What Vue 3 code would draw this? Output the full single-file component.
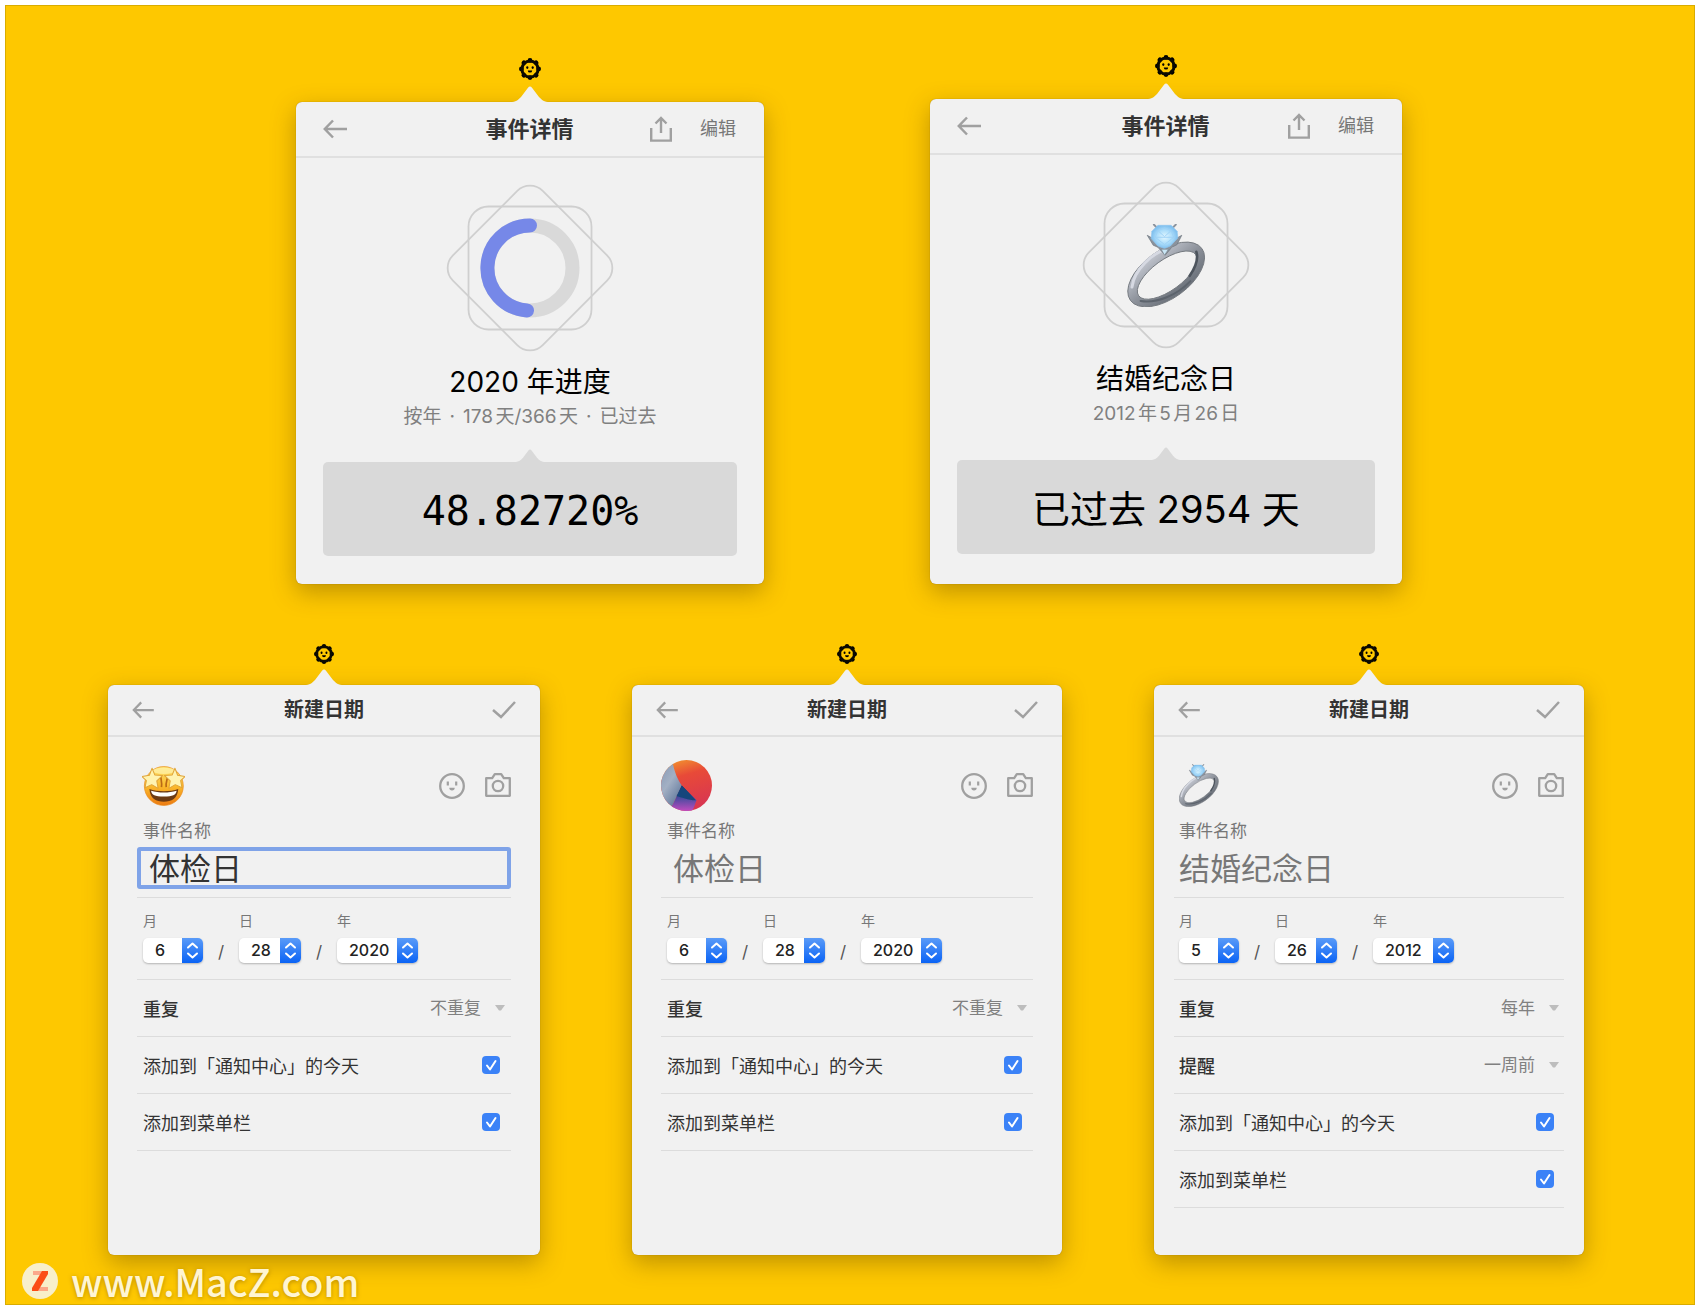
<script setup>
import { ref } from 'vue'

const details = [
  {
    id: 'progress',
    title: '2020 年进度',
    subtitle: ['按年', '178天/366天', '已过去'],
    value: '48.82720%',
    figure: 'progress',
  },
  {
    id: 'wedding',
    title: '结婚纪念日',
    subtitle: ['2012年5月26日'],
    value: '已过去 2954 天',
    figure: 'ring',
  },
]

const forms = ref([
  {
    id: 'checkup',
    icon: 'star',
    name: '体检日',
    date: { month: '6', day: '28', year: '2020' },
    options: [{ label: '重复', value: '不重复' }],
    today: true,
    menubar: true,
  },
  {
    id: 'photo',
    icon: 'photo',
    name: '体检日',
    date: { month: '6', day: '28', year: '2020' },
    options: [{ label: '重复', value: '不重复' }],
    today: true,
    menubar: true,
  },
  {
    id: 'anniversary',
    icon: 'ring',
    name: '结婚纪念日',
    date: { month: '5', day: '26', year: '2012' },
    options: [
      { label: '重复', value: '每年' },
      { label: '提醒', value: '一周前' },
    ],
    today: true,
    menubar: true,
  },
])

const dateParts = [
  { key: 'month', label: '月' },
  { key: 'day', label: '日' },
  { key: 'year', label: '年' },
]

const switches = [
  { key: 'today', label: '添加到「通知中心」的今天' },
  { key: 'menubar', label: '添加到菜单栏' },
]

const rays = [0, 45, 90, 135, 180, 225, 270, 315]
</script>

<template>
  <svg class="symbols" aria-hidden="true">
    <defs>
      <linearGradient id="metal" x1="0" y1="0" x2="1" y2="1">
        <stop offset="0" stop-color="#7d828a" />
        <stop offset="0.25" stop-color="#c3c7d0" />
        <stop offset="0.5" stop-color="#8d929b" />
        <stop offset="0.75" stop-color="#6a7079" />
        <stop offset="1" stop-color="#a3a8b0" />
      </linearGradient>
      <radialGradient id="gem">
        <stop offset="0" stop-color="#e4f8ff" />
        <stop offset="0.6" stop-color="#a9dcfa" />
        <stop offset="1" stop-color="#7fbfee" />
      </radialGradient>
      <linearGradient id="face" x1="0" y1="0" x2="0" y2="1">
        <stop offset="0" stop-color="#fde272" />
        <stop offset="0.5" stop-color="#fbbb2c" />
        <stop offset="1" stop-color="#ec7a12" />
      </linearGradient>
      <linearGradient id="warm" x1="0" y1="0" x2="0.3" y2="1">
        <stop offset="0" stop-color="#f3a02c" />
        <stop offset="0.4" stop-color="#e84a38" />
        <stop offset="1" stop-color="#d93750" />
      </linearGradient>
      <linearGradient id="slate" x1="0" y1="0" x2="0.6" y2="1">
        <stop offset="0" stop-color="#8497b3" />
        <stop offset="0.5" stop-color="#a3b0c4" />
        <stop offset="1" stop-color="#5e7599" />
      </linearGradient>
      <linearGradient id="dusk" x1="0" y1="0" x2="0" y2="1">
        <stop offset="0" stop-color="#16335f" />
        <stop offset="0.5" stop-color="#4c4ba0" />
        <stop offset="1" stop-color="#c04cc0" />
      </linearGradient>
      <clipPath id="disc"><circle cx="76" cy="76" r="76" /></clipPath>
    </defs>

    <symbol id="sun" viewBox="0 0 22 22">
      <circle v-for="a in rays" :key="a" cx="11" cy="2.4" r="2.4" :transform="`rotate(${a} 11 11)`" />
      <circle cx="11" cy="11" r="8.1" fill="none" stroke="#0c0a00" stroke-width="3" />
      <ellipse cx="8.3" cy="9.6" rx="1.1" ry="1.3" />
      <ellipse cx="13.7" cy="9.6" rx="1.1" ry="1.3" />
      <path d="M8.8 12.4h4.4a2.2 2.2 0 0 1-4.4 0z" />
    </symbol>

    <symbol id="ring" viewBox="0 0 236 250">
      <path
        fill="url(#metal)" stroke="#74797f" stroke-width="3" fill-rule="evenodd"
        d="M224.6 73.8A133 72-36 1 1 9.4 230.2A133 72-36 1 1 224.6 73.8ZM205.8 91.7A106 46-36 1 1 34.2 216.3A106 46-36 1 1 205.8 91.7Z"
      />
      <path d="M14 190C20 140 70 88 132 68" fill="none" stroke="#d6d9e2" stroke-width="9" stroke-linecap="round" />
      <path d="M40 232C90 240 150 214 190 172" fill="none" stroke="#5d646d" stroke-width="6" stroke-linecap="round" />
      <path d="M208 84C214 104 206 130 188 156" fill="none" stroke="#4d545d" stroke-width="8" stroke-linecap="round" />
      <path d="M60 34L78 64 92 70 114 94 134 70 150 62 164 34 150 42 112 66 74 42Z" fill="#8b939d" stroke="#6b737c" stroke-width="2" />
      <path d="M80 2l10 10M146 2l-10 10" stroke="#8b939d" stroke-width="6" stroke-linecap="round" />
      <path d="M92 4h40l18 18 2 20-22 24-18 8-20-8-20-22 2-22z" fill="url(#gem)" stroke="#8ec6ee" stroke-width="2" />
      <path d="M92 20l20-8 20 8 8 20-28 22-28-22zM92 20l20 18 20-18M84 40h56" fill="none" stroke="#9fd2f6" stroke-width="3" />
      <path d="M102 76l10 18 12-18z" fill="#c9e6f5" stroke="#7d858e" stroke-width="2" />
    </symbol>

    <symbol id="star" viewBox="0 0 128 118">
      <circle cx="65" cy="59" r="58" fill="url(#face)" stroke="#e98a1c" stroke-width="2" />
      <ellipse cx="65" cy="14" rx="34" ry="9" fill="#fff0a4" opacity="0.8" />
      <path d="M58 62C60 48 56 38 56 32M72 62C70 48 76 38 76 32" fill="none" stroke="#b96a16" stroke-width="5" />
      <path
        d="M30 6l8 20 23 2-17 16 4 22-19-11-20 9 4-21L0 31l22-4zM98 6l-8 20-23 2 17 16-4 22 19-11 20 9-4-21 13-12-22-4z"
        fill="#fff3b0" stroke="#e0a438" stroke-width="3" stroke-linejoin="round"
      />
      <path d="M22 68C46 77 84 77 108 68C106 96 88 106 65 106S24 96 22 68Z" fill="#6b3a14" />
      <path d="M27 73C50 80 80 80 103 73C101 86 92 90 65 90S29 86 27 73Z" fill="#fff" />
    </symbol>

    <symbol id="photo" viewBox="0 0 152 152">
      <g clip-path="url(#disc)">
        <path d="M0 0h152v152H0z" fill="url(#warm)" />
        <path d="M36 0v14C42 40 50 58 62 76L34 136 20 152H0V0z" fill="url(#slate)" />
        <path d="M62 76L106 120C100 134 96 152 90 152H20L34 136z" fill="url(#dusk)" />
        <path d="M62 76L104 120C80 120 60 110 46 108z" fill="#16467c" />
      </g>
    </symbol>

    <symbol id="back" viewBox="0 0 24 20">
      <path d="M10 1.5L1.8 10l8.2 8.5M1.8 10H24" fill="none" stroke="#a0a0a0" stroke-width="2.5" />
    </symbol>
    <symbol id="share" viewBox="0 0 22 26">
      <path d="M1.2 12v12.6h19.6V12M11 17V2M5.5 7.5L11 2l5.500 5.500" fill="none" stroke="#a0a0a0" stroke-width="2.4" />
    </symbol>
    <symbol id="check" viewBox="0 0 24 18">
      <path d="M1 9l8 7L23 1" fill="none" stroke="#a0a0a0" stroke-width="2.5" />
    </symbol>
    <symbol id="smile" viewBox="0 0 26 26">
      <circle cx="13" cy="13" r="11.8" fill="none" stroke="#a0a0a0" stroke-width="2.3" />
      <path d="M8.8 8.5v4M17.2 8.5v4" stroke="#a0a0a0" stroke-width="2.2" />
      <path d="M10.300 14.800h5.400a2.700 2.700 0 0 1-5.400 0z" fill="#a0a0a0" />
    </symbol>
    <symbol id="camera" viewBox="0 0 26 26">
      <path d="M1.2 5.200h6l2.600-4h6.400l2.600 4h6v17.600H1.200z" fill="none" stroke="#a0a0a0" stroke-width="2.3" stroke-linejoin="round" />
      <circle cx="13" cy="13" r="5.200" fill="none" stroke="#a0a0a0" stroke-width="2.3" />
    </symbol>
    <symbol id="caret" viewBox="0 0 40 16">
      <path d="M0 16C6 16 8 14 11 11L18 1.8Q20-.6 22 1.8L29 11C32 14 34 16 40 16Z" />
    </symbol>
  </svg>

  <main class="stage">
    <section class="row row--details">
      <article v-for="item in details" :key="item.id" class="popover" :class="`popover--${item.id}`">
        <svg class="sun"><use href="#sun" /></svg>
        <svg class="caret"><use href="#caret" /></svg>
        <div class="card">
          <header class="bar">
            <button type="button" class="icon-button" aria-label="返回">
              <svg class="icon-back"><use href="#back" /></svg>
            </button>
            <h2 class="bar-title">事件详情</h2>
            <div class="bar-actions">
              <button type="button" class="icon-button" aria-label="分享">
                <svg class="icon-share"><use href="#share" /></svg>
              </button>
              <button type="button" class="edit">编辑</button>
            </div>
          </header>
          <div class="detail">
            <svg class="figure" viewBox="-84 -84 168 168">
              <g fill="none" stroke="#cfcfcf" stroke-width="1.8">
                <rect x="-61.5" y="-61.5" width="123" height="123" rx="20" />
                <rect x="-63.5" y="-63.5" width="127" height="127" rx="18" transform="rotate(45)" />
              </g>
              <g v-if="item.figure === 'progress'" fill="none" stroke-width="14">
                <circle r="42.5" stroke="#d9d9d9" />
                <path d="M0-42.5A42.5 42.5 0 0 0-3 42.4" stroke="#7688e8" stroke-linecap="round" />
              </g>
              <use v-else href="#ring" x="-39" y="-41" width="79" height="83" />
            </svg>
            <h3 class="detail-title">{{ item.title }}</h3>
            <p class="detail-subtitle">
              <template v-for="(part, i) in item.subtitle" :key="part">
                <span v-if="i">·</span>
                <span>{{ part }}</span>
              </template>
            </p>
            <svg class="value-caret"><use href="#caret" /></svg>
            <output class="value">{{ item.value }}</output>
          </div>
        </div>
      </article>
    </section>

    <section class="row row--forms">
      <article v-for="form in forms" :key="form.id" class="popover" :class="`popover--${form.id}`">
        <svg class="sun"><use href="#sun" /></svg>
        <svg class="caret"><use href="#caret" /></svg>
        <form class="card" @submit.prevent>
          <header class="bar">
            <button type="button" class="icon-button" aria-label="返回">
              <svg class="icon-back"><use href="#back" /></svg>
            </button>
            <h2 class="bar-title">新建日期</h2>
            <div class="bar-actions">
              <button type="submit" class="icon-button" aria-label="完成">
                <svg class="icon-check"><use href="#check" /></svg>
              </button>
            </div>
          </header>
          <div class="fields">
            <div class="picture">
              <svg :class="`picture-${form.icon}`"><use :href="`#${form.icon}`" /></svg>
              <div class="picture-actions">
                <button type="button" class="icon-button" aria-label="选择表情">
                  <svg class="icon-pick"><use href="#smile" /></svg>
                </button>
                <button type="button" class="icon-button" aria-label="选择照片">
                  <svg class="icon-pick"><use href="#camera" /></svg>
                </button>
              </div>
            </div>
            <div class="name">
              <label class="name-label" :for="`${form.id}-name`">事件名称</label>
              <input :id="`${form.id}-name`" v-model="form.name" class="name-input" type="text" />
            </div>
            <div class="date">
              <template v-for="part in dateParts" :key="part.key">
                <span v-if="part.key !== 'month'" class="slash">/</span>
                <div class="date-part">
                  <label :for="`${form.id}-${part.key}`">{{ part.label }}</label>
                  <div class="stepper" :class="`stepper--${part.key}`">
                    <select :id="`${form.id}-${part.key}`" v-model="form.date[part.key]">
                      <option>{{ form.date[part.key] }}</option>
                    </select>
                    <svg class="stepper-arrows" viewBox="0 0 21 25">
                      <path d="M6 9.5l4.500-4 4.500 4M6 15.500l4.500 4 4.500-4" fill="none" stroke="#fff" stroke-width="2" stroke-linecap="round" stroke-linejoin="round" />
                    </svg>
                  </div>
                </div>
              </template>
            </div>
            <div v-for="(option, i) in form.options" :key="option.label" class="line">
              <label class="line-strong" :for="`${form.id}-option-${i}`">{{ option.label }}</label>
              <div class="choice">
                <select :id="`${form.id}-option-${i}`" v-model="option.value">
                  <option>{{ option.value }}</option>
                </select>
                <svg class="choice-arrow" viewBox="0 0 10 6"><path d="M0 0h10L6 5.500H4z" fill="#bdbdbd" /></svg>
              </div>
            </div>
            <div v-for="item in switches" :key="item.key" class="line">
              <label :for="`${form.id}-${item.key}`">{{ item.label }}</label>
              <div class="tick">
                <input :id="`${form.id}-${item.key}`" v-model="form[item.key]" type="checkbox" />
                <svg v-if="form[item.key]" viewBox="0 0 18 18">
                  <path d="M5 9.500l3 4L13.500 5" fill="none" stroke="#fff" stroke-width="2" stroke-linecap="round" stroke-linejoin="round" />
                </svg>
              </div>
            </div>
          </div>
        </form>
      </article>
    </section>

    <footer class="site">
      <svg class="site-logo" viewBox="0 0 36 36">
        <circle cx="18" cy="18" r="18" fill="#f8efca" />
        <path d="M11 8h14v4H11zM11 24h15v4H11z" fill="#fba98a" />
        <path d="M20 8h6v3L16 28h-6v-3z" fill="#fb4d16" />
      </svg>
      <a class="site-link" href="#">www.MacZ.com</a>
    </footer>
  </main>
</template>

<style>
body {
  margin: 0;
  background: #fff;
}
</style>

<style scoped>
* {
  box-sizing: border-box;
}

.symbols {
  position: absolute;
  width: 0;
  height: 0;
}

.stage {
  display: flex;
  flex-direction: column;
  min-height: calc(100vh - 10px);
  margin: 5px;
  border: 1px solid #d9ac00;
  background: #fec800;
  font-family: Inter, "Noto Sans CJK SC", sans-serif;
  color: #333;
}

.row {
  display: grid;
  align-items: end;
}

.row--details {
  grid-template-columns: 290fr 468fr 166fr 472fr 292fr;
  padding-top: 49px;
}

.row--forms {
  grid-template-columns: 102fr 432fr 92fr 430fr 92fr 430fr 110fr;
  padding-top: 60px;
}

.popover {
  display: flex;
  flex-direction: column;
  align-items: center;
  min-width: 0;
}

.popover:nth-child(1) { grid-column: 2; }
.popover:nth-child(2) { grid-column: 4; }
.popover:nth-child(3) { grid-column: 6; }

.sun {
  width: 22px;
  height: 22px;
  margin-bottom: 6px;
}

.caret {
  position: relative;
  z-index: 1;
  width: 40px;
  height: 16px;
  fill: #f1f1f1;
}

.card {
  width: 100%;
  border-radius: 6px;
  background: #f1f1f1;
  box-shadow: 0 0 1px rgba(90, 60, 0, 0.6), 0 8px 24px rgba(90, 60, 0, 0.38);
}

.bar {
  display: grid;
  grid-template-columns: 1fr auto 1fr;
  align-items: center;
  height: 56px;
  padding: 0 28px 0 27px;
  border-bottom: 2px solid #e0e0e0;
}

.bar-title {
  margin: 0;
  font-size: 22px;
  line-height: 32px;
  font-weight: 700;
}

.bar-actions {
  display: flex;
  align-items: center;
  justify-content: flex-end;
  gap: 28px;
}

button {
  padding: 0;
  border: 0;
  background: none;
  font: inherit;
  cursor: pointer;
}

.icon-button {
  display: flex;
  justify-self: start;
}

.icon-back { width: 24px; height: 20px; }
.icon-share { width: 22px; height: 26px; }
.icon-check { width: 24px; height: 18px; }
.icon-pick { width: 26px; height: 26px; }

.edit {
  font-size: 18px;
  line-height: 24px;
  color: #777;
}

.detail {
  display: flex;
  flex-direction: column;
  align-items: center;
  padding: 26px 27px 28px;
}

.figure {
  width: 168px;
  height: 168px;
}

.detail-title {
  margin: 10px 0 0;
  font-size: 28px;
  line-height: 40px;
  font-weight: 400;
  color: #000;
}

.detail-subtitle {
  display: flex;
  gap: 8px;
  margin: 1px 0 0;
  font-size: 19px;
  line-height: 28px;
  color: #808080;
  text-autospace: normal;
}

.value-caret {
  width: 32px;
  height: 13px;
  margin-top: 18px;
  fill: #d9d9d9;
}

.value {
  align-self: stretch;
  padding-top: 4px;
  border-radius: 5px;
  background: #d9d9d9;
  font-size: 38px;
  line-height: 90px;
  text-align: center;
  color: #000;
}

.popover--progress .value {
  font-family: "DejaVu Sans Mono", monospace;
  font-size: 40px;
}

.popover--wedding .detail {
  padding-bottom: 30px;
}

.popover--wedding .value-caret {
  margin-top: 19px;
}

.row--forms .sun {
  width: 20px;
  height: 20px;
  margin-bottom: 5px;
}

.row--forms .card {
  min-height: 570px;
}

.row--forms .bar {
  height: 52px;
  padding: 0 24px;
}

.row--forms .bar-title {
  font-size: 20px;
}

.row--forms .icon-back {
  width: 22px;
  height: 18px;
}

.fields {
  --inset: 6px;
  padding: 23px 29px 0;
}

.picture {
  display: flex;
  align-items: center;
  justify-content: space-between;
  height: 51px;
}

.picture-actions {
  display: flex;
  gap: 20px;
}

.picture-star { width: 43px; height: 40px; margin-left: 5px; }
.picture-photo { width: 51px; height: 51px; }
.picture-ring { width: 40px; height: 43px; margin-left: 5px; }

.name {
  display: flex;
  flex-direction: column;
  margin-top: 8px;
  padding-bottom: 8px;
  border-bottom: 1px solid #dcdcdc;
}

.name-label {
  padding-left: var(--inset);
  font-size: 17px;
  line-height: 24px;
  color: #777;
}

.name-input {
  width: 100%;
  height: 42px;
  margin-top: 4px;
  padding: 0 8px 4px;
  border: 4px solid transparent;
  border-radius: 3px;
  outline: 0;
  background: transparent;
  font: inherit;
  font-size: 31px;
  line-height: 30px;
  color: #777;
}

.popover--checkup .name-input {
  border-color: #7fa3e8;
  color: #333;
}

.date {
  display: flex;
  align-items: flex-end;
  height: 82px;
  padding: 0 var(--inset) 16px;
  border-bottom: 1px solid #dcdcdc;
}

.date-part label {
  display: block;
  margin-bottom: 7px;
  font-size: 14px;
  line-height: 20px;
  color: #777;
}

.slash {
  width: 36px;
  font-size: 17px;
  line-height: 22px;
  text-align: center;
  color: #555;
}

.stepper {
  display: flex;
  height: 25px;
  border-radius: 5px;
  overflow: hidden;
  background: #fff;
  box-shadow: 0 1px 2px rgba(0, 0, 0, 0.25);
}

.stepper--month { width: 60px; }
.stepper--day { width: 62px; }
.stepper--year { width: 81px; }

select {
  appearance: none;
  min-width: 0;
  margin: 0;
  border: 0;
  outline: 0;
  background: transparent;
  font: inherit;
}

.stepper select {
  flex: 1;
  padding: 0 0 1px 12px;
  font-size: 16px;
  font-weight: 500;
  color: #222;
}

.stepper-arrows {
  flex: none;
  width: 21px;
  height: 25px;
  background: linear-gradient(#5a9bf8, #0a63f5);
  pointer-events: none;
}

.line {
  display: flex;
  align-items: center;
  justify-content: space-between;
  height: 57px;
  padding: 0 var(--inset);
  border-bottom: 1px solid #dcdcdc;
  font-size: 18px;
}

.line-strong {
  font-weight: 500;
}

.choice {
  display: flex;
  align-items: center;
  gap: 14px;
}

.choice select {
  font-size: 17px;
  text-align-last: right;
  color: #808080;
}

.choice-arrow {
  width: 10px;
  height: 6px;
}

.tick {
  position: relative;
  display: flex;
  margin-right: 5px;
}

.tick input {
  appearance: none;
  width: 18px;
  height: 18px;
  margin: 0;
  border-radius: 4px;
  background: #fff;
}

.tick input:checked {
  background: #3b82f7;
}

.tick svg {
  position: absolute;
  inset: 0;
  pointer-events: none;
}

.popover--anniversary .fields {
  --inset: 5px;
  padding: 23px 20px 0;
}

.popover--anniversary .name-input {
  padding: 0 1px 4px;
}

.site {
  display: flex;
  align-items: center;
  gap: 13px;
  padding: 3px 16px 0;
}

.site-logo {
  width: 36px;
  height: 36px;
}

.site-link {
  font-family: "Noto Sans CJK SC", sans-serif;
  font-size: 38px;
  line-height: 46px;
  font-weight: 500;
  color: #fff5d2;
  text-decoration: none;
  text-shadow: 0 1px 4px rgba(120, 80, 0, 0.5);
}
</style>
